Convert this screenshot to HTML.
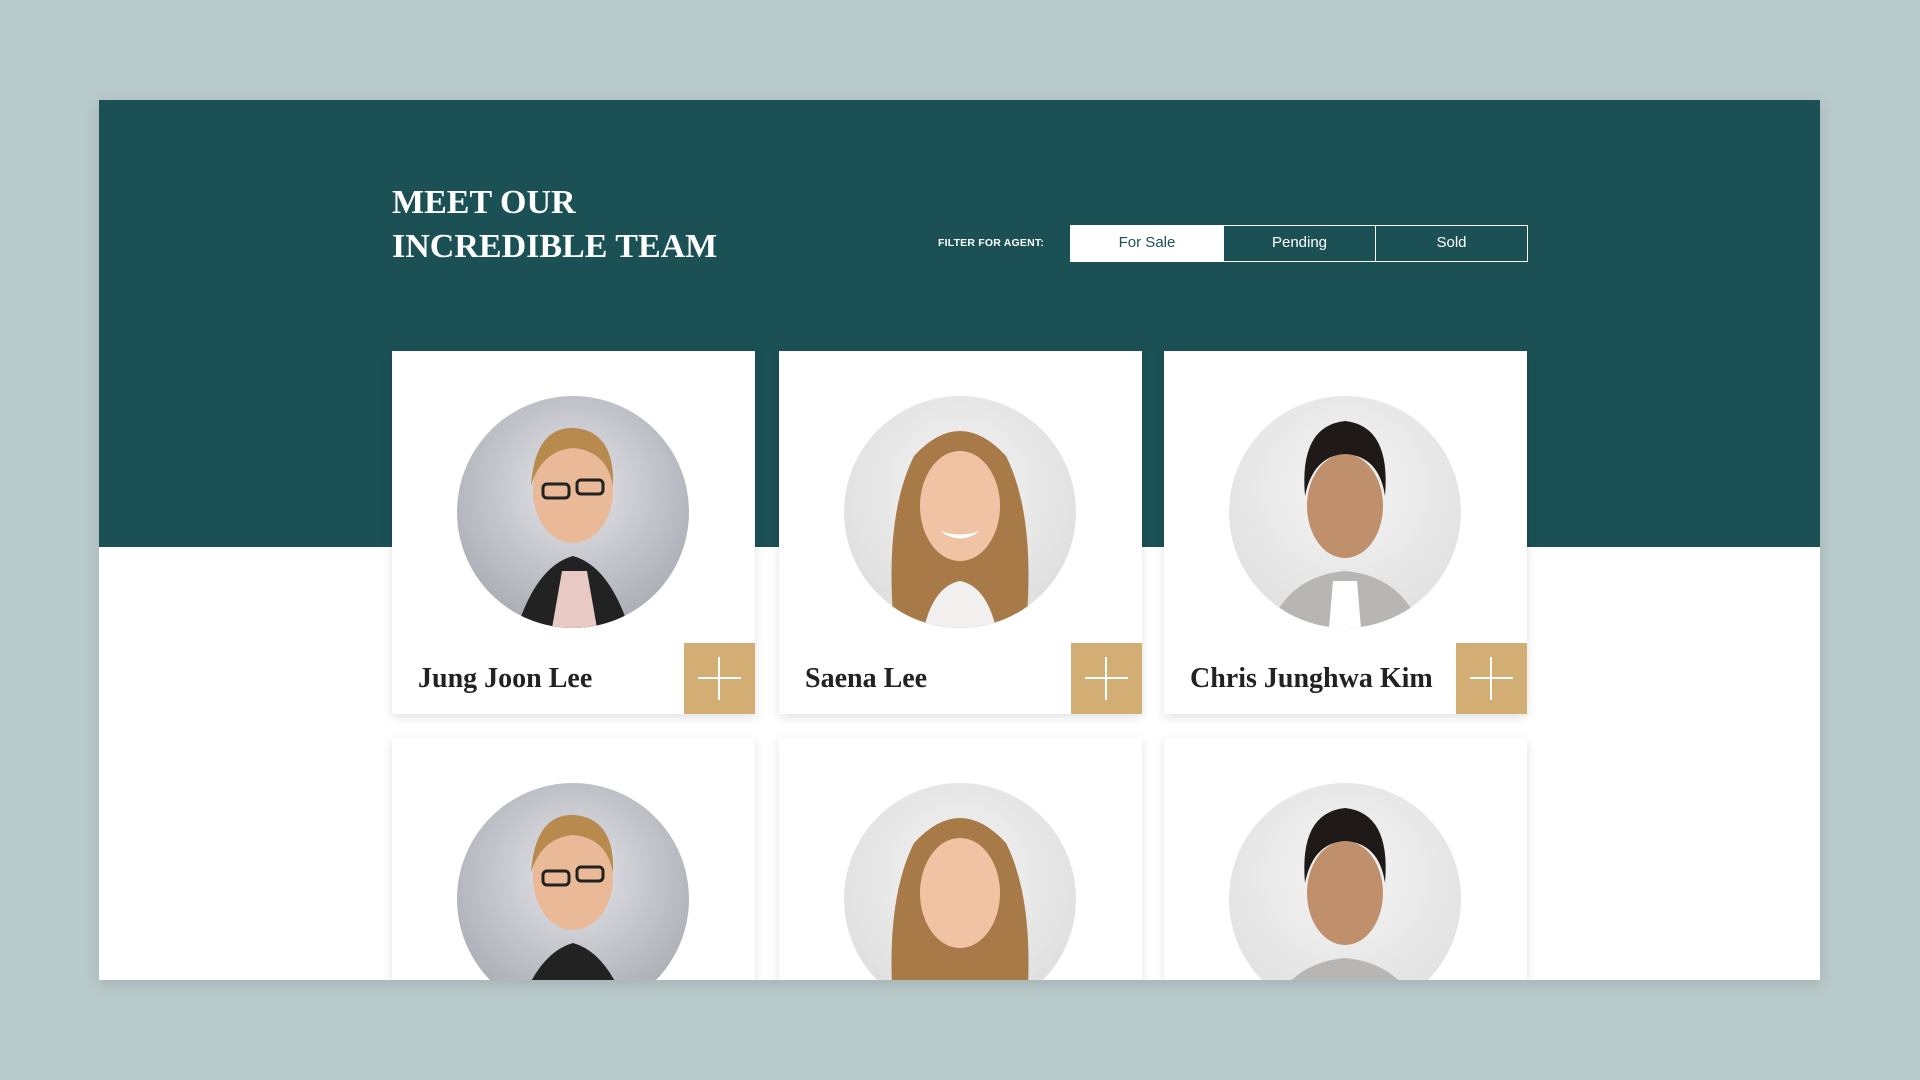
<!DOCTYPE html>
<html><head><meta charset="utf-8"><style>
*{margin:0;padding:0;box-sizing:border-box}
body{width:1920px;height:1080px;background:#b9caca;position:relative;overflow:hidden;font-family:"Liberation Sans",sans-serif}
.panel{position:absolute;left:99px;top:100px;width:1721px;height:880px;background:#fff;overflow:hidden;box-shadow:0 4px 14px rgba(0,0,0,.12)}
.teal{position:absolute;left:0;top:0;width:100%;height:447px;background:#1b5155}
h1{position:absolute;left:293px;top:81px;color:#fff;font-family:"Liberation Serif",serif;font-weight:bold;font-size:34px;line-height:44px;letter-spacing:0}
.flabel{position:absolute;left:839px;top:137px;color:#fff;font-size:10.5px;font-weight:bold;letter-spacing:.2px}
.btns{position:absolute;left:971px;top:125px;display:flex;border:1px solid #fff}
.btns div{width:152px;height:35px;line-height:33px;text-align:center;color:#fff;font-size:15px;border-left:1px solid #fff}
.btns div:first-child{border-left:none;background:#fff;color:#1b5155}
.card{position:absolute;width:363px;height:363px;background:#fff;box-shadow:0 3px 10px rgba(0,0,0,.12)}
.circ{position:absolute;left:65px;top:45px;width:232px;height:232px;border-radius:50%;overflow:hidden}
.name{position:absolute;left:26px;top:312px;font-family:"Liberation Serif",serif;font-weight:bold;font-size:28px;color:#222}
.plus{position:absolute;right:0;top:292px;width:71px;height:71px;background:#d2ad74}
.plus:before{content:"";position:absolute;left:14px;top:34px;width:43px;height:2px;background:#fff}
.plus:after{content:"";position:absolute;left:34px;top:14px;width:2px;height:43px;background:#fff}
</style></head><body>
<div class="panel">
<div class="teal"></div>
<h1>MEET OUR<br>INCREDIBLE TEAM</h1>
<div class="flabel">FILTER FOR AGENT:</div>
<div class="btns"><div>For Sale</div><div>Pending</div><div>Sold</div></div>

<div class="card" style="left:293px;top:251px"><div class="circ" style="background:radial-gradient(circle at 50% 40%,#e6e6ea,#9a9ca6)"><svg width="232" height="232"><path d="M60 232 Q80 170 116 160 Q152 170 172 232Z" fill="#222"/><path d="M95 232 L105 175 L130 175 L140 232Z" fill="#e9c9c4"/><ellipse cx="116" cy="95" rx="40" ry="52" fill="#e9b998"/><path d="M74 90 Q78 30 118 32 Q158 36 156 90 Q150 55 116 52 Q84 55 74 90Z" fill="#b98a4e"/><rect x="86" y="88" width="26" height="14" rx="4" fill="none" stroke="#222" stroke-width="3"/><rect x="120" y="84" width="26" height="14" rx="4" fill="none" stroke="#222" stroke-width="3"/></svg></div><div class="name">Jung Joon Lee</div><div class="plus"></div></div>

<div class="card" style="left:680px;top:251px"><div class="circ" style="background:radial-gradient(circle at 50% 40%,#f4f4f4,#d8d8d8)"><svg width="232" height="232"><path d="M50 232 Q40 120 70 60 Q116 10 162 60 Q192 120 182 232Z" fill="#a87a48"/><path d="M80 232 Q90 190 116 185 Q142 190 152 232Z" fill="#f2f0ee"/><ellipse cx="116" cy="110" rx="40" ry="55" fill="#efc3a4"/><path d="M96 135 Q116 150 136 135 Q116 142 96 135Z" fill="#fff"/></svg></div><div class="name">Saena Lee</div><div class="plus"></div></div>

<div class="card" style="left:1065px;top:251px"><div class="circ" style="background:radial-gradient(circle at 50% 40%,#f4f4f4,#dcdcdc)"><svg width="232" height="232"><path d="M40 232 Q60 180 116 175 Q172 180 192 232Z" fill="#b7b6b4"/><path d="M100 232 L104 185 L128 185 L132 232Z" fill="#fff"/><ellipse cx="116" cy="110" rx="38" ry="52" fill="#c08f6c"/><path d="M76 100 Q70 30 116 25 Q162 30 156 100 Q150 60 116 58 Q84 60 76 100Z" fill="#1f1a18"/></svg></div><div class="name">Chris Junghwa Kim</div><div class="plus"></div></div>

<div class="card" style="left:293px;top:638px"><div class="circ" style="background:radial-gradient(circle at 50% 40%,#e6e6ea,#9a9ca6)"><svg width="232" height="232"><path d="M60 232 Q80 170 116 160 Q152 170 172 232Z" fill="#222"/><ellipse cx="116" cy="95" rx="40" ry="52" fill="#e9b998"/><path d="M74 90 Q78 30 118 32 Q158 36 156 90 Q150 55 116 52 Q84 55 74 90Z" fill="#b98a4e"/><rect x="86" y="88" width="26" height="14" rx="4" fill="none" stroke="#222" stroke-width="3"/><rect x="120" y="84" width="26" height="14" rx="4" fill="none" stroke="#222" stroke-width="3"/></svg></div></div>
<div class="card" style="left:680px;top:638px"><div class="circ" style="background:radial-gradient(circle at 50% 40%,#f4f4f4,#d8d8d8)"><svg width="232" height="232"><path d="M50 232 Q40 120 70 60 Q116 10 162 60 Q192 120 182 232Z" fill="#a87a48"/><ellipse cx="116" cy="110" rx="40" ry="55" fill="#efc3a4"/></svg></div></div>
<div class="card" style="left:1065px;top:638px"><div class="circ" style="background:radial-gradient(circle at 50% 40%,#f4f4f4,#dcdcdc)"><svg width="232" height="232"><path d="M40 232 Q60 180 116 175 Q172 180 192 232Z" fill="#b7b6b4"/><ellipse cx="116" cy="110" rx="38" ry="52" fill="#c08f6c"/><path d="M76 100 Q70 30 116 25 Q162 30 156 100 Q150 60 116 58 Q84 60 76 100Z" fill="#1f1a18"/></svg></div></div>
</div>
</body></html>
